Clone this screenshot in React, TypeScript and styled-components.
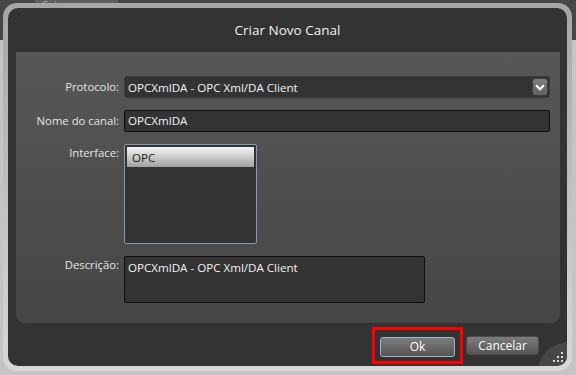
import styled, { createGlobalStyle } from "styled-components";

const GlobalStyle = createGlobalStyle`
  html, body {
    margin: 0;
    padding: 0;
  }
  body {
    width: 576px;
    height: 375px;
    overflow: hidden;
    background: #c4c4c4;
    font-family: "Open Sans", "Noto Sans", sans-serif;
  }
`;

const Desktop = styled.div`
  position: relative;
  width: 576px;
  height: 375px;
  overflow: hidden;
  display: flex;
  flex-direction: column;
`;

const TopBar = styled.div`
  height: 40px;
  background: #474747;
  display: flex;
  padding-left: 35px;
`;

const Tab = styled.div`
  width: 77px;
  height: 12px;
  padding-left: 6px;
  background: #5e5e5e;
  color: #9c9c9c;
  font-size: 12px;
  line-height: 12px;
`;

const Workspace = styled.div`
  flex: 1;
  background: #c4c4c4;
`;

const Dialog = styled.div`
  position: absolute;
  left: 3px;
  top: 3px;
  width: 569px;
  height: 368px;
  box-sizing: border-box;
  padding: 5px;
  border-radius: 14px;
  background: linear-gradient(#a6a6a6, #d8d8d8);
`;

const DialogBody = styled.div`
  position: relative;
  height: 100%;
  border-radius: 10px;
  background: #333333;
  display: flex;
  flex-direction: column;
  overflow: hidden;
`;

const Title = styled.div`
  height: 44px;
  display: flex;
  align-items: center;
  justify-content: center;
  color: #f2f2f2;
  font-size: 13.5px;
`;

const Panel = styled.div`
  margin: 0 7px 0 8px;
  height: 271px;
  box-sizing: border-box;
  padding: 24px 10px 0 0;
  border-radius: 0 0 9px 9px;
  background: linear-gradient(#575757, #464646);
  display: grid;
  grid-template-columns: 103px 1fr;
  grid-template-rows: 22px 22px 100px 46px;
  column-gap: 5px;
  row-gap: 12px;
`;

const Label = styled.div<{ $top?: boolean }>`
  text-align: right;
  color: #e6e6e6;
  font-size: 11.3px;
  line-height: ${(p) => (p.$top ? "18px" : "22px")};
  white-space: nowrap;
`;

const Combo = styled.div`
  display: flex;
  align-items: center;
  box-sizing: border-box;
  height: 22px;
  padding: 0 1px 0 3px;
  border-radius: 3px;
  background: #333333;
  border: 1px solid #3a3a3a;
  color: #f4f4f4;
  font-size: 11.6px;
`;

const ComboText = styled.span`
  flex: 1;
`;

const DropButton = styled.div`
  width: 16px;
  height: 18px;
  box-sizing: border-box;
  border-radius: 3px;
  border: 1px solid #3c3c3c;
  background: linear-gradient(#7e7e7e, #606060);
  display: flex;
  align-items: center;
  justify-content: center;
`;

const TextBox = styled.div<{ $w?: number; $h?: number }>`
  box-sizing: border-box;
  width: ${(p) => (p.$w ? `${p.$w}px` : "100%")};
  height: ${(p) => (p.$h ? `${p.$h}px` : "22px")};
  padding: ${(p) => (p.$h ? "3px 3px" : "0 3px")};
  border: 1px solid #0e0e0e;
  border-radius: 2px;
  background: #333333;
  color: #f4f4f4;
  font-size: 11.6px;
  line-height: ${(p) => (p.$h ? "16px" : "20px")};
`;

const ListBox = styled.div`
  width: 133px;
  height: 100px;
  box-sizing: border-box;
  padding: 2px;
  border: 1px solid #8a99a8;
  border-radius: 2px;
  background: #333333;
`;

const ListItem = styled.div<{ $selected?: boolean }>`
  height: 20px;
  padding-left: 5px;
  font-size: 11.6px;
  line-height: 21px;
  color: ${(p) => (p.$selected ? "#1c1c1c" : "#f0f0f0")};
  background: ${(p) =>
    p.$selected ? "linear-gradient(#f6f6f6, #a0a0a0)" : "transparent"};
`;

const Footer = styled.div`
  flex: 1;
  display: flex;
  align-items: center;
  justify-content: flex-end;
  gap: 3px;
  padding: 2px 28px 0 0;
`;

const Highlight = styled.div`
  padding: 4px 5px;
  border: 3px solid #ff0000;
`;

const Button = styled.button<{ $focused?: boolean }>`
  height: ${(p) => (p.$focused ? "20px" : "19px")};
  width: ${(p) => (p.$focused ? "75px" : "73px")};
  padding: 0;
  border-radius: 3px;
  border: 1px solid ${(p) => (p.$focused ? "#9fb6c9" : "#4a4a4a")};
  background: linear-gradient(#7c7c7c, #555555);
  color: #ffffff;
  font-family: inherit;
  font-size: 12px;
  line-height: 17px;
  cursor: pointer;
`;

const Grip = styled.svg`
  position: absolute;
  right: 0;
  bottom: 0;
`;

export default function App() {
  return (
    <>
      <GlobalStyle />
      <Desktop>
        <TopBar>
          <Tab>Criar</Tab>
        </TopBar>
        <Workspace />
        <Dialog>
          <DialogBody>
            <Title>Criar Novo Canal</Title>
            <Panel>
              <Label>Protocolo:</Label>
              <Combo>
                <ComboText>OPCXmlDA - OPC Xml/DA Client</ComboText>
                <DropButton>
                  <svg width="10" height="7" viewBox="0 0 10 7">
                    <path
                      d="M1.2 1.2 L5 5.2 L8.8 1.2"
                      fill="none"
                      stroke="#ffffff"
                      strokeWidth="2"
                    />
                  </svg>
                </DropButton>
              </Combo>
              <Label>Nome do canal:</Label>
              <TextBox>OPCXmlDA</TextBox>
              <Label $top>Interface:</Label>
              <ListBox>
                <ListItem $selected>OPC</ListItem>
              </ListBox>
              <Label $top>Descrição:</Label>
              <TextBox $w={301} $h={47}>
                OPCXmlDA - OPC Xml/DA Client
              </TextBox>
            </Panel>
            <Footer>
              <Highlight>
                <Button $focused>Ok</Button>
              </Highlight>
              <Button>Cancelar</Button>
            </Footer>
            <Grip width="28" height="24" viewBox="0 0 28 24">
              <path d="M0 24 Q3 4 28 0 L28 24 Z" fill="#474747" />
              <g fill="#d8d8d8">
                <rect x="22" y="10" width="2" height="2" />
                <rect x="18" y="14" width="2" height="2" />
                <rect x="22" y="14" width="2" height="2" />
                <rect x="14" y="18" width="2" height="2" />
                <rect x="18" y="18" width="2" height="2" />
                <rect x="22" y="18" width="2" height="2" />
              </g>
            </Grip>
          </DialogBody>
        </Dialog>
      </Desktop>
    </>
  );
}
